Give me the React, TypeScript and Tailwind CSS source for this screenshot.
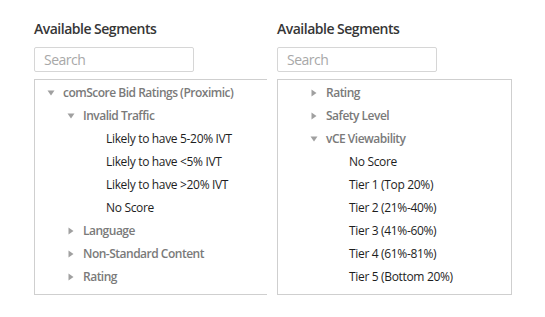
import React from 'react';

type Node = { label: string; depth: number; kind: 'open' | 'closed' | 'leaf' };

const leftTree: Node[] = [
  { label: 'comScore Bid Ratings (Proximic)', depth: 0, kind: 'open' },
  { label: 'Invalid Traffic', depth: 1, kind: 'open' },
  { label: 'Likely to have 5-20% IVT', depth: 2, kind: 'leaf' },
  { label: 'Likely to have <5% IVT', depth: 2, kind: 'leaf' },
  { label: 'Likely to have >20% IVT', depth: 2, kind: 'leaf' },
  { label: 'No Score', depth: 2, kind: 'leaf' },
  { label: 'Language', depth: 1, kind: 'closed' },
  { label: 'Non-Standard Content', depth: 1, kind: 'closed' },
  { label: 'Rating', depth: 1, kind: 'closed' },
];

const rightTree: Node[] = [
  { label: 'Rating', depth: 1, kind: 'closed' },
  { label: 'Safety Level', depth: 1, kind: 'closed' },
  { label: 'vCE Viewability', depth: 1, kind: 'open' },
  { label: 'No Score', depth: 2, kind: 'leaf' },
  { label: 'Tier 1 (Top 20%)', depth: 2, kind: 'leaf' },
  { label: 'Tier 2 (21%-40%)', depth: 2, kind: 'leaf' },
  { label: 'Tier 3 (41%-60%)', depth: 2, kind: 'leaf' },
  { label: 'Tier 4 (61%-81%)', depth: 2, kind: 'leaf' },
  { label: 'Tier 5 (Bottom 20%)', depth: 2, kind: 'leaf' },
  { label: 'Integral Ad Science', depth: 0, kind: 'closed' },
];

const Caret: React.FC<{ open: boolean }> = ({ open }) => (
  <svg width="8" height="8" viewBox="0 0 8 8" className="shrink-0">
    {open ? <path d="M0.5 1.5 L7.5 1.5 L4 6.5 Z" fill="#a0a0a0" /> : <path d="M1.5 0.5 L6.5 4 L1.5 7.5 Z" fill="#a0a0a0" />}
  </svg>
);

const pad = ['pl-[12px]', 'pl-[32px]', 'pl-[71px]'];

const Row: React.FC<{ node: Node }> = ({ node }) => {
  if (node.kind === 'leaf') {
    return (
      <div className={`h-[23px] flex items-center whitespace-nowrap text-[12px] tracking-[-0.33px] text-[#1e1e1e] ${pad[2]}`}>
        {node.label}
      </div>
    );
  }
  return (
    <div className={`h-[23px] flex items-center gap-[8px] whitespace-nowrap ${pad[node.depth]}`}>
      <Caret open={node.kind === 'open'} />
      <span className="text-[12px] tracking-[-0.5px] font-semibold text-[#7a7a7a]">{node.label}</span>
    </div>
  );
};

const Panel: React.FC<{ nodes: Node[]; width: string; right?: boolean }> = ({ nodes, width, right }) => (
  <div className={`flex flex-col ${width}`}>
    <h2 className="text-[14px] leading-[20px] tracking-[-0.5px] font-semibold text-[#363636]">Available Segments</h2>
    <div className="mt-[8px] w-[160px] h-[25px] border border-[#d6d6d6] rounded-[2px] flex items-center px-[9px]">
      <span className="text-[14px] tracking-[-0.5px] text-[#a8a8a8]">Search</span>
    </div>
    <div
      className={`mt-[7px] h-[216px] border border-[#cfcfcf] overflow-hidden pt-px ${right ? '' : 'border-r-0'}`}
    >
      {nodes.map((n, i) => (
        <Row key={i} node={n} />
      ))}
    </div>
  </div>
);

const App: React.FC = () => {
  return (
    <div
      className="w-[545px] h-[317px] bg-white flex gap-[10px] pl-[34px] pt-[19px]"
      style={{ fontFamily: '"Open Sans", "Noto Sans", sans-serif' }}
    >
      <Panel nodes={leftTree} width="w-[233px]" />
      <Panel nodes={rightTree} width="w-[235px]" right />
    </div>
  );
};

export default App;
